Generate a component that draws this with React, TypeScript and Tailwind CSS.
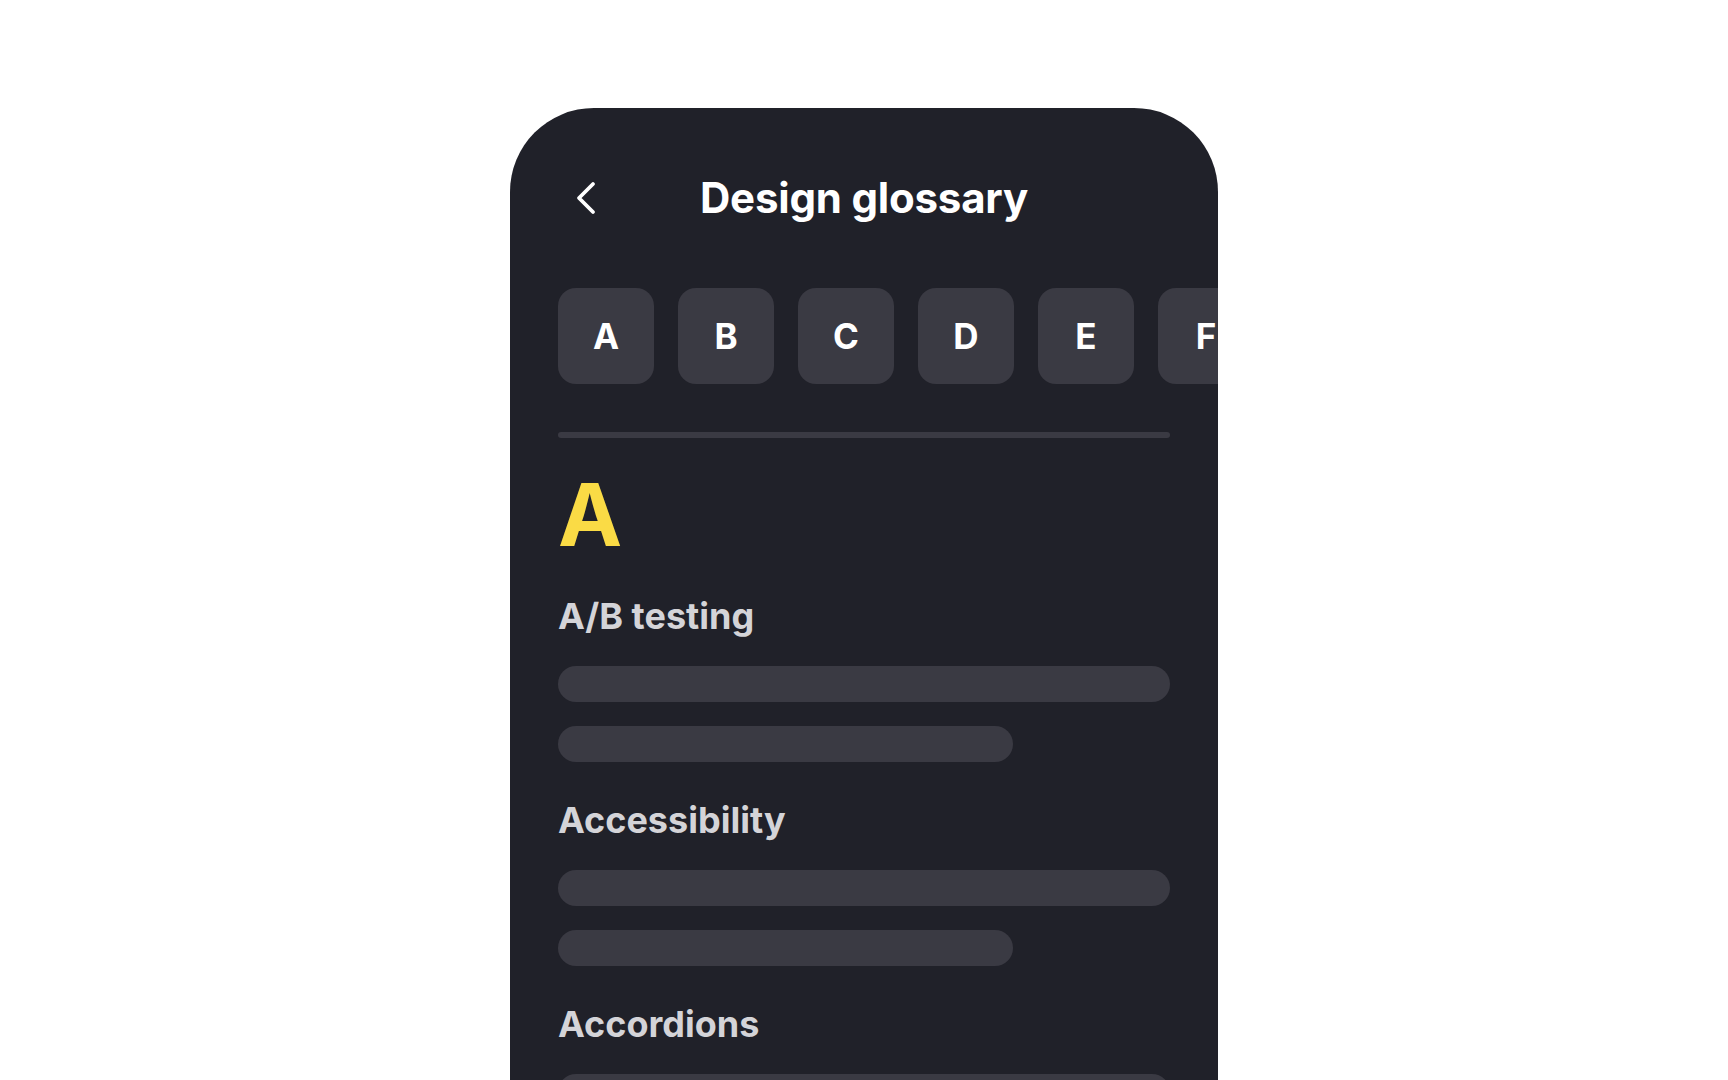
// Design glossary – mobile screen mock

const letters = ['A', 'B', 'C', 'D', 'E', 'F', 'G'];

const terms = ['A/B testing', 'Accessibility', 'Accordions', 'Affordance'];

const BackIcon = () => (
  <svg width="22" height="34" viewBox="0 0 22 34" fill="none">
    <polyline
      points="18,3 4,17 18,31"
      stroke="#ffffff"
      strokeWidth="3.8"
      strokeLinecap="round"
      strokeLinejoin="round"
    />
  </svg>
);

const Term = ({ title }: { title: string }) => (
  <div className="mt-[40px]">
    <h3 className="text-[36px] leading-none font-bold text-[#d4d4d8]">{title}</h3>
    <div className="mt-[32px] h-[36px] w-full rounded-full bg-[#3a3a43]" />
    <div className="mt-[24px] h-[36px] w-[455px] rounded-full bg-[#3a3a43]" />
  </div>
);

const App = () => {
  return (
    <div
      className="h-screen w-full overflow-hidden bg-white flex justify-center pt-[108px]"
      style={{ fontFamily: 'Inter, "Noto Sans", sans-serif' }}
    >
      <div className="w-[708px] h-[1200px] shrink-0 overflow-hidden rounded-t-[84px] bg-[#202129]">
        {/* header */}
        <div className="mt-[60px] h-[60px] grid grid-cols-[1fr_auto_1fr] items-center">
          <div className="pl-[65px] flex items-center">
            <BackIcon />
          </div>
          <h1 className="text-[42px] leading-none font-bold tracking-[-0.2px] text-white">Design glossary</h1>
          <div />
        </div>

        {/* alphabet row */}
        <div className="mt-[60px] pl-12 flex gap-6">
          {letters.map((l) => (
            <div
              key={l}
              className="w-[96px] h-[96px] shrink-0 rounded-[18px] bg-[#3a3a43] flex items-center justify-center text-[35px] font-bold text-white"
            >
              {l}
            </div>
          ))}
        </div>

        <div className="px-12">
          <div className="mt-[48px] h-[6px] rounded-full bg-[#3a3a43]" />

          <div className="mt-[34px] text-[86px] leading-none font-bold text-[#fadb45]">A</div>

          {terms.map((t) => (
            <Term key={t} title={t} />
          ))}
        </div>
      </div>
    </div>
  );
};

export default App;
